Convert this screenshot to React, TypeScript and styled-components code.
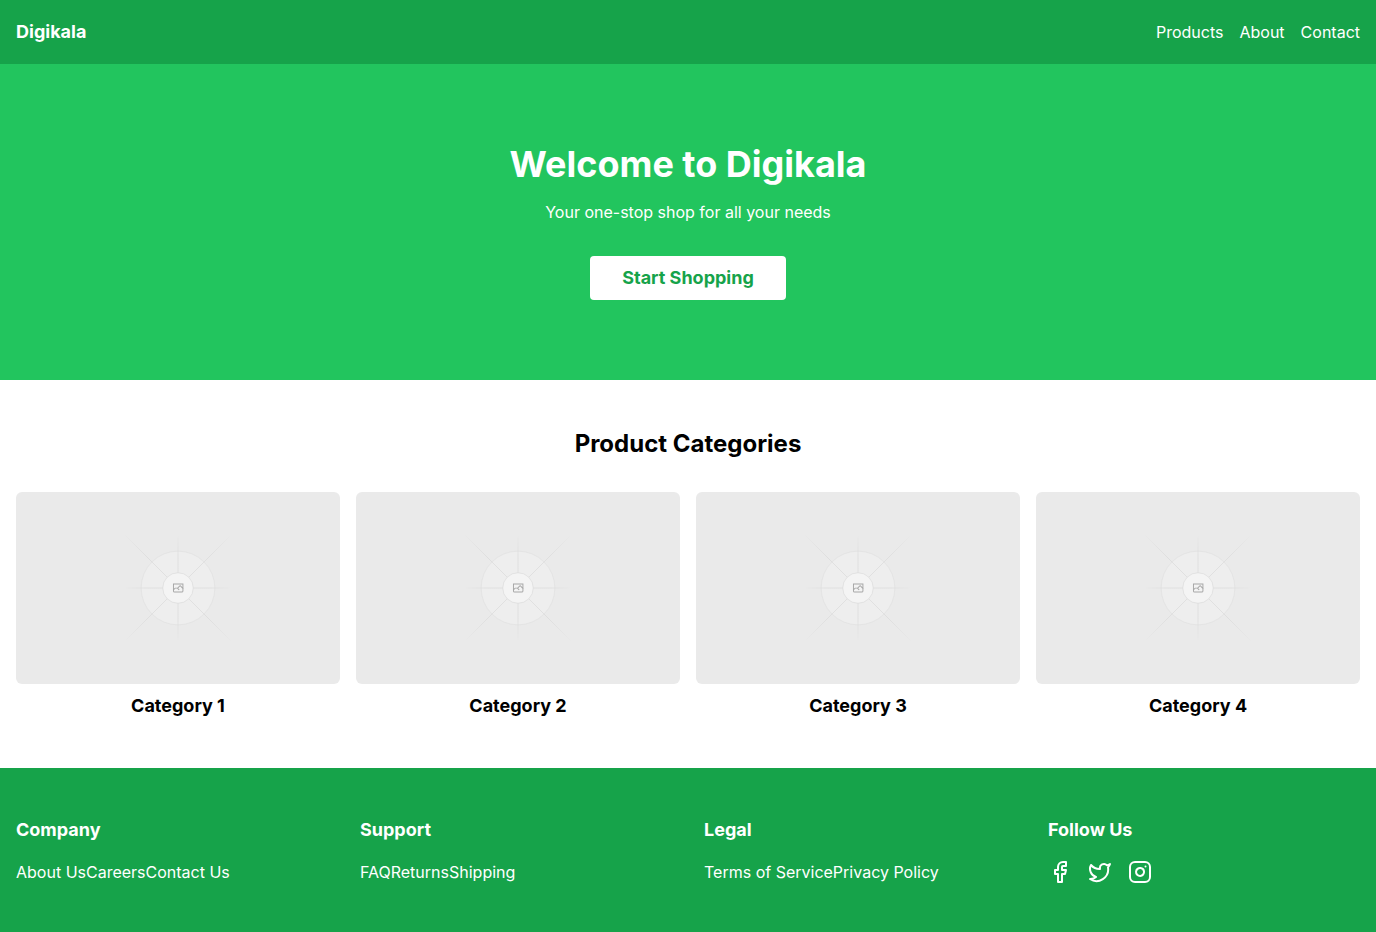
import React from "react";
import styled, { createGlobalStyle } from "styled-components";
import { Facebook, Instagram, Twitter } from "lucide-react";

const GlobalStyle = createGlobalStyle`
  *, *::before, *::after { box-sizing: border-box; }
  body {
    margin: 0;
    background: #fff;
    color: #000;
    font-family: Inter, "Liberation Sans", sans-serif;
    font-size: 16px;
    line-height: 24px;
  }
  h1, h2, h3, p, ul { margin: 0; padding: 0; }
  ul { list-style: none; }
  a { color: inherit; text-decoration: none; }
`;

const Page = styled.div`
  display: flex;
  flex-direction: column;
  min-height: 100vh;
`;

const Header = styled.header`
  display: flex;
  align-items: center;
  justify-content: space-between;
  padding: 18px 16px;
  background: #16a34a;
  color: #fff;
`;

const Brand = styled.a`
  font-size: 18px;
  line-height: 28px;
  font-weight: 700;
`;

const Nav = styled.nav`
  display: flex;
  gap: 16px;
`;

const Hero = styled.section`
  display: flex;
  flex-direction: column;
  align-items: center;
  padding: 80px 16px;
  background: #22c55e;
  color: #fff;
  text-align: center;
`;

const HeroTitle = styled.h1`
  font-size: 36px;
  line-height: 40px;
  font-weight: 700;
`;

const HeroText = styled.p`
  margin: 16px 0 32px;
`;

const HeroButton = styled.button`
  padding: 8px 32px;
  border: 0;
  border-radius: 4px;
  background: #fff;
  color: #16a34a;
  font-family: inherit;
  font-size: 18px;
  line-height: 28px;
  font-weight: 700;
  cursor: pointer;
`;

const Categories = styled.section`
  flex: 1;
  padding: 48px 16px;
`;

const SectionTitle = styled.h2`
  margin-bottom: 32px;
  font-size: 24px;
  line-height: 32px;
  font-weight: 700;
  text-align: center;
`;

const CategoryGrid = styled.div`
  display: grid;
  grid-template-columns: repeat(4, minmax(0, 1fr));
  gap: 16px;
`;

const CategoryCard = styled.article`
  display: flex;
  flex-direction: column;
  gap: 8px;
  text-align: center;
`;

const Picture = styled.svg`
  display: block;
  width: 100%;
  height: 192px;
  border-radius: 6px;
  background: #eaeaea;
`;

const SmallTitle = styled.h3`
  font-size: 18px;
  line-height: 28px;
  font-weight: 700;
`;

const Footer = styled.footer`
  display: grid;
  grid-template-columns: repeat(4, minmax(0, 1fr));
  gap: 32px;
  padding: 48px 16px;
  background: #16a34a;
  color: #fff;
`;

const FooterColumn = styled.div`
  display: flex;
  flex-direction: column;
  gap: 16px;
`;

const LinkList = styled.ul<{ $gap?: number }>`
  display: flex;
  gap: ${({ $gap = 0 }) => $gap}px;
`;

const IconLink = styled.a`
  display: block;
  svg { display: block; }
`;

const categories = ["Category 1", "Category 2", "Category 3", "Category 4"];

const footerColumns = [
  { title: "Company", links: ["About Us", "Careers", "Contact Us"] },
  { title: "Support", links: ["FAQ", "Returns", "Shipping"] },
  { title: "Legal", links: ["Terms of Service", "Privacy Policy"] },
];

const socials = [
  { name: "Facebook", Icon: Facebook },
  { name: "Twitter", Icon: Twitter },
  { name: "Instagram", Icon: Instagram },
];

const rays = [
  { x1: 404, y1: 600, x2: 796, y2: 600.01 },
  { x1: 600, y1: 404, x2: 600.01, y2: 796 },
  { x1: 404, y1: 404, x2: 796, y2: 796 },
  { x1: 796, y1: 404, x2: 404, y2: 796 },
];

function Placeholder({ id, label }: { id: string; label: string }) {
  return (
    <Picture viewBox="0 0 1200 1200" preserveAspectRatio="xMidYMid slice" fill="none" role="img" aria-label={label}>
      <defs>
        {rays.map((ray, i) => (
          <linearGradient key={i} id={`${id}-${i}`} gradientUnits="userSpaceOnUse" {...ray}>
            <stop stopColor="#C9C9C9" stopOpacity="0" />
            <stop offset=".208" stopColor="#C9C9C9" />
            <stop offset=".792" stopColor="#C9C9C9" />
            <stop offset="1" stopColor="#C9C9C9" stopOpacity="0" />
          </linearGradient>
        ))}
      </defs>
      <g opacity=".5">
        <circle cx="600" cy="600" r="136.5" fill="#FAFAFA" stroke="#C9C9C9" strokeWidth="2.418" opacity=".5" />
        {rays.map((ray, i) => (
          <line key={i} {...ray} stroke={`url(#${id}-${i})`} strokeWidth="2.418" />
        ))}
        <circle cx="600" cy="600" r="56.5" fill="#fff" />
        <path
          fill="#666"
          fillRule="evenodd"
          d="M616.426 586.58h-31.434v16.176l3.553-3.554.531-.531h9.068l.074-.074 8.463-8.463h2.565l7.18 7.181V586.58Zm-15.715 14.654 3.698 3.699 1.283 1.282-2.565 2.565-1.282-1.283-5.2-5.199h-6.066l-5.514 5.514-.073.073v2.876a2.418 2.418 0 0 0 2.418 2.418h26.598a2.418 2.418 0 0 0 2.418-2.418v-8.317l-8.463-8.463-7.181 7.181-.071.072Zm-19.347 5.442v4.085a6.045 6.045 0 0 0 6.046 6.045h26.598a6.044 6.044 0 0 0 6.045-6.045v-7.108l1.356-1.355-1.282-1.283-.074-.073v-17.989h-38.689v23.43l-.146.146.146.147Z"
        />
        <circle cx="600" cy="600" r="56.5" stroke="#C9C9C9" strokeWidth="2.418" />
      </g>
    </Picture>
  );
}

export default function App() {
  return (
    <>
      <GlobalStyle />
      <Page>
        <Header>
          <Brand href="#">Digikala</Brand>
          <Nav>
            <a href="#products">Products</a>
            <a href="#about">About</a>
            <a href="#contact">Contact</a>
          </Nav>
        </Header>
        <Hero>
          <HeroTitle>Welcome to Digikala</HeroTitle>
          <HeroText>Your one-stop shop for all your needs</HeroText>
          <HeroButton type="button">Start Shopping</HeroButton>
        </Hero>
        <Categories id="products">
          <SectionTitle>Product Categories</SectionTitle>
          <CategoryGrid>
            {categories.map((name, i) => (
              <CategoryCard key={name}>
                <Placeholder id={`ray-${i}`} label={name} />
                <SmallTitle>{name}</SmallTitle>
              </CategoryCard>
            ))}
          </CategoryGrid>
        </Categories>
        <Footer>
          {footerColumns.map(({ title, links }) => (
            <FooterColumn key={title}>
              <SmallTitle>{title}</SmallTitle>
              <LinkList>
                {links.map((link) => (
                  <li key={link}>
                    <a href="#">{link}</a>
                  </li>
                ))}
              </LinkList>
            </FooterColumn>
          ))}
          <FooterColumn>
            <SmallTitle>Follow Us</SmallTitle>
            <LinkList $gap={16}>
              {socials.map(({ name, Icon }) => (
                <li key={name}>
                  <IconLink href="#" aria-label={name}>
                    <Icon size={24} />
                  </IconLink>
                </li>
              ))}
            </LinkList>
          </FooterColumn>
        </Footer>
      </Page>
    </>
  );
}
